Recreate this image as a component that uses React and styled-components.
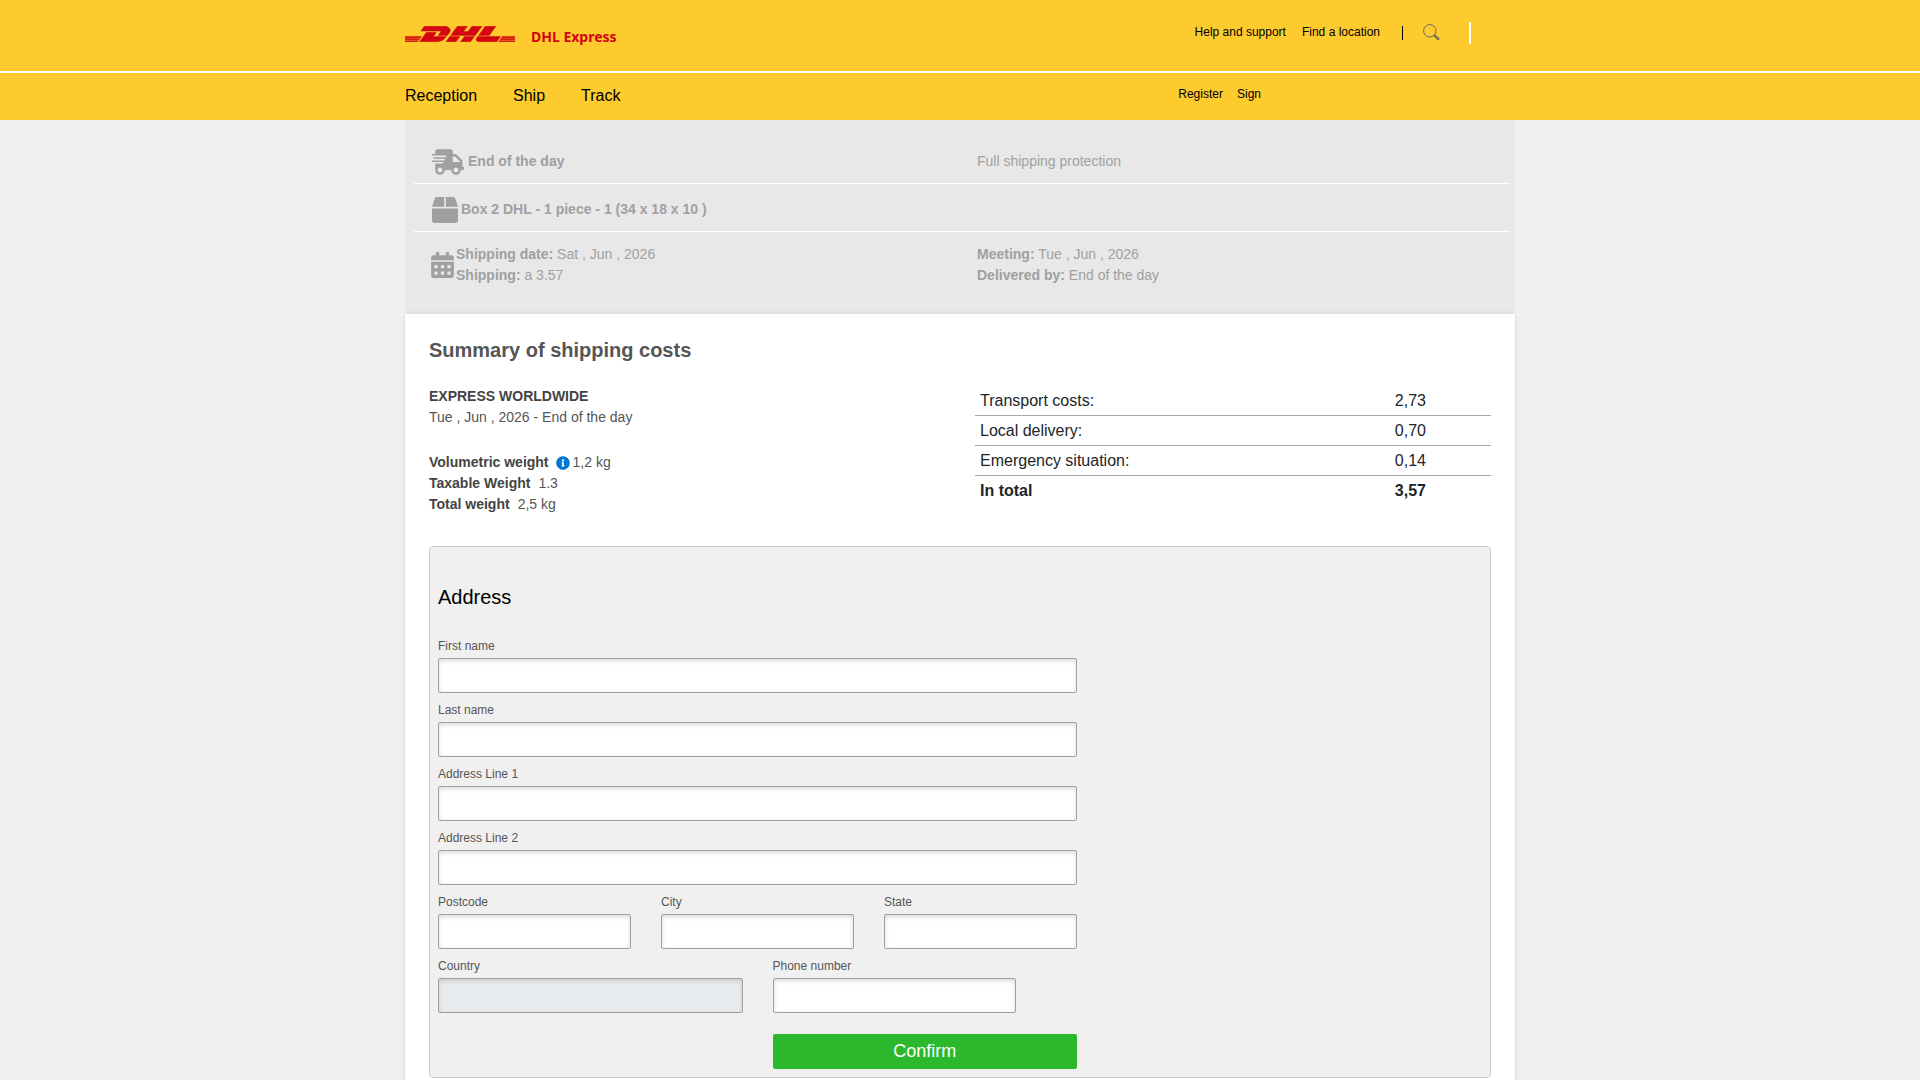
import React from "react";
import styled, { createGlobalStyle } from "styled-components";
import { FaShippingFast, FaBox, FaCalendarAlt, FaInfoCircle } from "react-icons/fa";
import { SiDhl } from "react-icons/si";

const GlobalStyle = createGlobalStyle`
  *, *::before, *::after { box-sizing: border-box; }
  body {
    margin: 0;
    background: #f0f0f0;
    color: #212529;
    font-family: "Liberation Sans", Arial, Helvetica, sans-serif;
    font-size: 14px;
    line-height: 21px;
  }
`;

const Container = styled.div`
  width: 100%;
  max-width: 1110px;
  margin: 0 auto;
`;

const Header = styled.header`
  background: #fecb2f;
`;

const TopBar = styled.div`
  border-bottom: 2px solid #fff;
`;

const BarRow = styled(Container)`
  display: flex;
  justify-content: space-between;
  align-items: flex-start;
`;

const Brand = styled.a`
  display: flex;
  align-items: flex-start;
  gap: 16px;
  padding: 26px 0 24px;
  color: #d40511;
  text-decoration: none;
`;

const Logo = styled(SiDhl)`
  width: 110px;
  height: 16px;
  stroke: currentColor;
  stroke-width: 0.1px;
`;

const BrandName = styled.span`
  font-family: "Noto Sans", "Open Sans", sans-serif;
  font-size: 14px;
  font-weight: 700;
  line-height: 21px;
`;

const TopLinks = styled.nav`
  display: flex;
  align-items: center;
  gap: 16px;
  padding: 22px 44px 0 0;
`;

const SmallLink = styled.a`
  color: #000;
  font-size: 12px;
  line-height: 18px;
  text-decoration: none;
`;

const TopLink = styled(SmallLink)`
  padding-bottom: 2px;
`;

const Divider = styled.span`
  width: ${(p) => (p.$light ? 2 : 1)}px;
  height: ${(p) => (p.$light ? 22 : 14)}px;
  margin-left: ${(p) => (p.$light ? 13 : 6)}px;
  background: ${(p) => (p.$light ? "#fff" : "#000")};
`;

const SearchButton = styled.button`
  display: flex;
  margin: 0 0 0 4px;
  padding: 0 0 2px;
  border: 0;
  background: none;
  color: #666;
`;

const MainNav = styled.nav`
  display: flex;
  gap: 36px;
  padding: 11px 0 12px;
`;

const NavLink = styled.a`
  color: #000;
  font-size: 16px;
  line-height: 24px;
  text-decoration: none;
`;

const AccountNav = styled.nav`
  display: flex;
  gap: 14px;
  padding: 12px 254px 0 0;
`;

const Shipment = styled.section`
  padding: 16px 5px 28px 9px;
  background: #e8e8e8;
  color: #a0a0a0;
`;

const ShipmentRow = styled.div`
  display: grid;
  grid-template-columns: 1fr 533px;
  align-items: center;
  min-height: 48px;
  padding-top: ${(p) => (p.$last ? 12 : 4)}px;
  padding-left: ${(p) => (p.$last ? 17 : 18)}px;
  border-bottom: ${(p) => (p.$last ? "0" : "1px solid #fff")};
`;

const IconLine = styled.div`
  display: flex;
  align-items: center;
  gap: ${(p) => p.$gap}px;
`;

const TruckIcon = styled(FaShippingFast)`
  width: 32px;
  height: 26px;
`;

const CalendarIcon = styled(FaCalendarAlt)`
  width: 23px;
  height: 26px;
`;

const Card = styled.main`
  padding: 24px;
  background: #fff;
  box-shadow: 0 0 5px rgba(0, 0, 0, 0.1);
`;

const CardTitle = styled.h1`
  margin: 0 0 24px;
  color: #555;
  font-size: 20px;
  line-height: 24px;
`;

const Costs = styled.div`
  display: grid;
  grid-template-columns: 1fr 516px;
  align-items: start;
  margin-bottom: 31px;
`;

const Paragraph = styled.div`
  margin-bottom: ${(p) => (p.$spaced ? 24 : 0)}px;
  color: #555;
`;

const Strong = styled.strong`
  color: #444;
`;

const Weight = styled.div`
  display: flex;
  align-items: center;
`;

const WeightLabel = styled(Strong)`
  margin-right: ${(p) => (p.$tight ? 7 : 8)}px;
`;

const InfoIcon = styled(FaInfoCircle)`
  margin-right: 3px;
  color: #0078d2;
`;

const Table = styled.table`
  width: 100%;
  border-collapse: separate;
  border-spacing: 0;
  font-size: 16px;
  line-height: 24px;
`;

const Cell = styled.td`
  height: 30px;
  width: ${(p) => (p.$value ? "20%" : "80%")};
  padding: 0 5px 0 ${(p) => (p.$value ? 7 : 5)}px;
  border-bottom: ${(p) => (p.$total ? "0" : "1px solid #a5a8ab")};
  font-weight: ${(p) => (p.$total ? 700 : 400)};
  text-align: left;
`;

const AddressBox = styled.form`
  padding: 38px 8px 8px;
  border: 1px solid #ccc;
  border-radius: 4px;
  background: #f0f0f0;
`;

const AddressTitle = styled.h2`
  margin: 0 0 28px;
  color: #000;
  font-size: 20px;
  font-weight: 400;
  line-height: 24px;
`;

const Fields = styled.div`
  display: grid;
  grid-template-columns: repeat(6, 1fr);
  gap: 8px 30px;
  max-width: 639px;
`;

const FieldBox = styled.div`
  display: flex;
  flex-direction: column;
  gap: 3px;
  grid-column: span ${(p) => p.$span};
`;

const Label = styled.label`
  color: #555;
  font-size: 12px;
  line-height: 18px;
`;

const Input = styled.input`
  width: ${(p) => (p.$short ? "80%" : "100%")};
  height: 35px;
  padding: 0 8px;
  border: 1px solid #a0a0a0;
  border-radius: 2px;
  background: #fff;
  box-shadow: inset 0 2px 4px rgba(0, 0, 0, 0.15);
  font: inherit;
  &:disabled { background: #e7ebee; }
`;

const Confirm = styled.button`
  grid-column: 4 / span 3;
  height: 35px;
  margin-top: 13px;
  padding: 0;
  border: 0;
  border-radius: 2px;
  background: #2cb82c;
  color: #fff;
  font-family: inherit;
  font-size: 18px;
`;

const FIELDS = [
  { id: "first", label: "First name", span: 6 },
  { id: "last", label: "Last name", span: 6 },
  { id: "line1", label: "Address Line 1", span: 6 },
  { id: "line2", label: "Address Line 2", span: 6 },
  { id: "postcode", label: "Postcode", span: 2 },
  { id: "city", label: "City", span: 2 },
  { id: "state", label: "State", span: 2 },
  { id: "country", label: "Country", span: 3, disabled: true },
  { id: "phone", label: "Phone number", span: 3, short: true },
];

const COSTS = [
  ["Transport costs:", "2,73"],
  ["Local delivery:", "0,70"],
  ["Emergency situation:", "0,14"],
  ["In total", "3,57"],
];

function SearchIcon() {
  return (
    <svg width="17" height="17" viewBox="0 0 17 17" fill="none" stroke="currentColor" aria-hidden="true">
      <circle cx="6.8" cy="6.8" r="6.2" strokeWidth="1" />
      <path d="M11.2 11.2 L16 15.6" strokeWidth="2.2" />
    </svg>
  );
}

export default function App() {
  return (
    <>
      <GlobalStyle />
      <Header>
        <TopBar>
          <BarRow>
            <Brand href="#">
              <Logo viewBox="0 10.25 24 3.5" aria-hidden="true" />
              <BrandName>DHL Express</BrandName>
            </Brand>
            <TopLinks>
              <TopLink href="#">Help and support</TopLink>
              <TopLink href="#">Find a location</TopLink>
              <Divider />
              <SearchButton type="button" aria-label="Search">
                <SearchIcon />
              </SearchButton>
              <Divider $light />
            </TopLinks>
          </BarRow>
        </TopBar>
        <BarRow>
          <MainNav>
            <NavLink href="#">Reception</NavLink>
            <NavLink href="#">Ship</NavLink>
            <NavLink href="#">Track</NavLink>
          </MainNav>
          <AccountNav>
            <SmallLink href="#">Register</SmallLink>
            <SmallLink href="#">Sign</SmallLink>
          </AccountNav>
        </BarRow>
      </Header>

      <Container>
        <Shipment>
          <ShipmentRow>
            <IconLine $gap={4}>
              <TruckIcon />
              <strong>End of the day</strong>
            </IconLine>
            <span>Full shipping protection</span>
          </ShipmentRow>
          <ShipmentRow>
            <IconLine $gap={3}>
              <FaBox size={26} />
              <strong>Box 2 DHL - 1 piece - 1 (34 x 18 x 10 )</strong>
            </IconLine>
          </ShipmentRow>
          <ShipmentRow $last>
            <IconLine $gap={2}>
              <CalendarIcon />
              <div>
                <div><strong>Shipping date:</strong> Sat , Jun , 2026</div>
                <div><strong>Shipping:</strong> a 3.57</div>
              </div>
            </IconLine>
            <div>
              <div><strong>Meeting:</strong> Tue , Jun , 2026</div>
              <div><strong>Delivered by:</strong> End of the day</div>
            </div>
          </ShipmentRow>
        </Shipment>

        <Card>
          <CardTitle>Summary of shipping costs</CardTitle>
          <Costs>
            <div>
              <Paragraph $spaced>
                <Strong>EXPRESS WORLDWIDE</Strong>
                <div>Tue , Jun , 2026 - End of the day</div>
              </Paragraph>
              <Paragraph>
                <Weight>
                  <WeightLabel $tight>Volumetric weight</WeightLabel>
                  <InfoIcon size={14} />
                  1,2 kg
                </Weight>
                <Weight><WeightLabel>Taxable Weight</WeightLabel>1.3</Weight>
                <Weight><WeightLabel>Total weight</WeightLabel>2,5 kg</Weight>
              </Paragraph>
            </div>
            <Table>
              <tbody>
                {COSTS.map(([name, value], i) => {
                  const total = i === COSTS.length - 1;
                  return (
                    <tr key={name}>
                      <Cell as="th" scope="row" $total={total}>{name}</Cell>
                      <Cell $value $total={total}>{value}</Cell>
                    </tr>
                  );
                })}
              </tbody>
            </Table>
          </Costs>

          <AddressBox onSubmit={(e) => e.preventDefault()}>
            <AddressTitle>Address</AddressTitle>
            <Fields>
              {FIELDS.map((f) => (
                <FieldBox key={f.id} $span={f.span}>
                  <Label htmlFor={f.id}>{f.label}</Label>
                  <Input id={f.id} type="text" disabled={f.disabled} $short={f.short} />
                </FieldBox>
              ))}
              <Confirm type="submit">Confirm</Confirm>
            </Fields>
          </AddressBox>
        </Card>
      </Container>
    </>
  );
}
